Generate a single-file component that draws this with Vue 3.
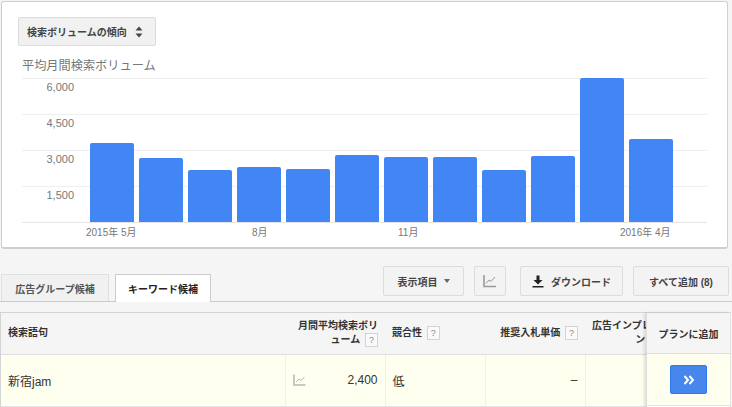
<script setup>
import { ref } from 'vue';

// 月ごとの検索ボリューム（棒の高さは px）
const bars = ref([79, 64, 52, 55, 53, 67, 65, 65, 52, 66, 144, 83]);
const gridLabels = ref(['6,000', '4,500', '3,000', '1,500']);
const xLabels = ref([
  { text: '2015年 5月', left: 0 },
  { text: '8月', left: 0 },
  { text: '11月', left: 0 },
  { text: '2016年 4月', left: 0 },
]);
</script>

<template>
  <div class="page">
    <section class="card">
      <button class="select-btn">
        <span>検索ボリュームの傾向</span>
        <svg class="updown" width="8" height="12" viewBox="0 0 8 12">
          <path d="M4 0.5 L7.5 4.5 H0.5 Z M4 11.5 L0.5 7.5 H7.5 Z" fill="#444" />
        </svg>
      </button>
      <h2 class="chart-title">平均月間検索ボリューム</h2>

      <div class="chart">
        <div class="grid-row" v-for="label in gridLabels" :key="label">
          <span class="y-label">{{ label }}</span>
        </div>
        <div class="grid-base"></div>
        <div class="bars">
          <div v-for="(h, i) in bars" :key="i" class="bar" :style="{ height: h + 'px' }"></div>
        </div>
      </div>
      <div class="x-axis">
        <span class="x-label x1">{{ xLabels[0].text }}</span>
        <span class="x-label x2">{{ xLabels[1].text }}</span>
        <span class="x-label x3">{{ xLabels[2].text }}</span>
        <span class="x-label x4">{{ xLabels[3].text }}</span>
      </div>
    </section>

    <div class="toolbar">
      <div class="tabs">
        <a class="tab">広告グループ候補</a>
        <a class="tab active">キーワード候補</a>
      </div>
      <div class="actions">
        <button class="btn columns-btn">表示項目 <i class="caret"></i></button>
        <button class="btn icon-btn">
          <svg width="16" height="14" viewBox="0 0 16 14" fill="none" stroke="#9a9a9a">
            <path d="M2 1 V12.5 H14" stroke-width="1.6" />
            <path d="M4 9.5 L7 6 L9 7.5 L13 3" stroke-width="1" />
          </svg>
        </button>
        <button class="btn download-btn">
          <svg width="12" height="13" viewBox="0 0 12 13">
            <path d="M4.5 0.5 H7.5 V5 H10.5 L6 9.5 L1.5 5 H4.5 Z M0.5 11 H11.5 V12.5 H0.5 Z" fill="#222" />
          </svg>
          ダウンロード
        </button>
        <button class="btn add-all-btn">すべて追加 (8)</button>
      </div>
    </div>

    <div class="table-wrap">
      <div class="table-scroll">
        <table>
          <colgroup>
            <col style="width: 284px" />
            <col style="width: 100px" />
            <col style="width: 100px" />
            <col style="width: 100px" />
            <col style="width: 100px" />
          </colgroup>
          <thead>
            <tr>
              <th>検索語句</th>
              <th class="right">月間平均検索ボリ<br />ューム <span class="help">?</span></th>
              <th>競合性 <span class="help">?</span></th>
              <th class="right">推奨入札単価 <span class="help">?</span></th>
              <th class="right">広告インプレッショ<br />ン シェア</th>
            </tr>
          </thead>
          <tbody>
            <tr>
              <td class="keyword">新宿jam</td>
              <td>
                <div class="volume">
                  <svg width="13" height="12" viewBox="0 0 13 12" fill="none" stroke="#b9b9a8">
                    <path d="M1 0.5 V11 H12.5" stroke-width="1.5" />
                    <path d="M3 8 L6 5 L8 6.5 L11.5 3" stroke-width="1" />
                  </svg>
                  <span>2,400</span>
                </div>
              </td>
              <td>低</td>
              <td class="right">–</td>
              <td></td>
            </tr>
          </tbody>
        </table>
      </div>
      <div class="frozen">
        <div class="frozen-head">プランに追加</div>
        <div class="frozen-cell">
          <button class="add-btn">
            <svg width="12" height="10" viewBox="0 0 12 10" fill="none" stroke="#fff" stroke-width="2">
              <path d="M1.5 1 L5 5 L1.5 9 M6.5 1 L10 5 L6.5 9" />
            </svg>
          </button>
        </div>
      </div>
    </div>
  </div>
</template>

<style>
html,
body {
  margin: 0;
  background: #f5f5f5;
}
</style>

<style scoped>
.page {
  width: 732px;
  height: 407px;
  overflow: hidden;
  font-family: "Liberation Sans", "Noto Sans CJK JP", sans-serif;
  background: #f5f5f5;
  box-sizing: border-box;
  padding-top: 1px;
}

.card {
  width: 727px;
  height: 248px;
  margin-left: 1px;
  box-sizing: border-box;
  background: #fff;
  border: 1px solid #cfcfcf;
  border-bottom-width: 2px;
  border-radius: 3px;
  padding: 15px 0 0 16px;
}

.select-btn {
  display: flex;
  align-items: center;
  gap: 8px;
  width: 138px;
  height: 29px;
  box-sizing: border-box;
  padding: 0 0 0 8px;
  background: #f1f1f1;
  border: 1px solid #dcdcdc;
  border-radius: 2px;
  font-family: inherit;
  font-size: 10px;
  font-weight: bold;
  color: #444;
  white-space: nowrap;
}

.chart-title {
  margin: 12px 0 0 4px;
  height: 17px;
  font-size: 12.2px;
  line-height: 17px;
  font-weight: normal;
  color: #777;
}

.chart {
  position: relative;
  width: 685px;
  margin: 3px 0 0 4px;
}

.grid-row {
  height: 36px;
  box-sizing: border-box;
  border-top: 1px solid #eee;
}

.grid-base {
  height: 1px;
  background: #e6e6e6;
}

.y-label {
  display: block;
  width: 52px;
  padding-top: 2px;
  text-align: right;
  font-size: 11px;
  line-height: 12px;
  color: #777;
}

/* 棒はグリッド線の上に重ねる */
.bars {
  position: absolute;
  left: 68px;
  bottom: 1px;
  display: flex;
  align-items: flex-end;
  gap: 5px;
}

.bar {
  width: 44px;
  background: #4285f4;
  border-radius: 2px 2px 0 0;
}

.x-axis {
  display: flex;
  height: 14px;
  margin: 3px 0 0 4px;
  font-size: 10px;
  line-height: 14px;
  color: #777;
}

.x-label {
  white-space: nowrap;
}

.x1 {
  margin-left: 64px;
  width: 166px;
}

.x2 {
  width: 146px;
}

.x3 {
  width: 222px;
}

.toolbar {
  display: flex;
  justify-content: space-between;
  height: 53px;
  margin-top: 0;
  box-sizing: border-box;
  padding: 17px 3px 0 1px;
  border-bottom: 1px solid #ccc;
}

.tabs {
  display: flex;
  align-items: flex-end;
  gap: 6px;
}

.tab {
  display: flex;
  align-items: center;
  justify-content: center;
  width: 108px;
  height: 27px;
  box-sizing: border-box;
  background: #f1f1f1;
  border: 1px solid #e0e0e0;
  border-bottom: none;
  font-size: 10px;
  font-weight: bold;
  color: #555;
}

.tab.active {
  width: 96px;
  height: 28px;
  margin-bottom: -1px;
  background: #fff;
  border-color: #ccc;
  color: #222;
}

.actions {
  display: flex;
  align-items: flex-start;
  gap: 10px;
}

.btn {
  display: flex;
  align-items: center;
  justify-content: center;
  height: 30px;
  box-sizing: border-box;
  padding: 0;
  background: #f3f3f3;
  border: 1px solid #dcdcdc;
  border-radius: 2px;
  font-family: inherit;
  font-size: 10px;
  font-weight: bold;
  color: #444;
  white-space: nowrap;
}

.columns-btn {
  width: 81px;
  gap: 6px;
}

.caret {
  width: 0;
  height: 0;
  border-left: 3.5px solid transparent;
  border-right: 3.5px solid transparent;
  border-top: 4px solid #666;
}

.icon-btn {
  width: 32px;
}

.download-btn {
  width: 103px;
  gap: 7px;
  margin-left: 4px;
}

.add-all-btn {
  width: 96px;
}

.table-wrap {
  display: flex;
  width: 731px;
  height: 95px;
  margin: 10px 0 0 0;
  background: #fff;
  box-sizing: border-box;
  border-top: 1px solid #d4d4d4;
  border-left: 1px solid #d4d4d4;
  border-right: 1px solid #e4e4e4;
}

.table-scroll {
  width: 646px;
  overflow: hidden;
}

table {
  width: 684px;
  table-layout: fixed;
  border-collapse: collapse;
}

th {
  height: 41px;
  box-sizing: border-box;
  padding: 0 7px;
  background: #f5f5f5;
  border-bottom: 1px solid #dedede;
  font-size: 10px;
  line-height: 14px;
  font-weight: bold;
  color: #333;
  text-align: left;
  white-space: nowrap;
}

td {
  height: 52px;
  box-sizing: border-box;
  padding: 0 7px;
  background: #fffff0;
  border-bottom: 1px solid #e4e4e4;
  border-left: 1px solid #f0f0e4;
  font-size: 12px;
  color: #333;
}

td:first-child {
  border-left: none;
}

.keyword {
  font-size: 12px;
}

.right {
  text-align: right;
}

.volume {
  display: flex;
  justify-content: space-between;
  align-items: center;
}

.help {
  display: inline-block;
  width: 11px;
  height: 12px;
  margin-left: 2px;
  border: 1px solid #d4d4d4;
  background: #fafafa;
  font-size: 9px;
  line-height: 12px;
  font-weight: normal;
  color: #888;
  text-align: center;
  vertical-align: middle;
}

.frozen {
  width: 83px;
  box-shadow: -2px 0 3px rgba(0, 0, 0, 0.12);
  border-left: 1px solid #ddd;
  z-index: 1;
}

.frozen-head {
  display: flex;
  align-items: center;
  justify-content: center;
  height: 41px;
  box-sizing: border-box;
  background: #f5f5f5;
  border-bottom: 1px solid #dedede;
  font-size: 10px;
  font-weight: bold;
  color: #333;
  white-space: nowrap;
}

.frozen-cell {
  display: flex;
  align-items: center;
  justify-content: center;
  height: 52px;
  box-sizing: border-box;
  background: #fffff0;
  border-bottom: 1px solid #e4e4e4;
}

.add-btn {
  display: flex;
  align-items: center;
  justify-content: center;
  width: 37px;
  height: 29px;
  padding: 0;
  background: #4787ed;
  border: 1px solid #3079ed;
  border-radius: 2px;
}
</style>
